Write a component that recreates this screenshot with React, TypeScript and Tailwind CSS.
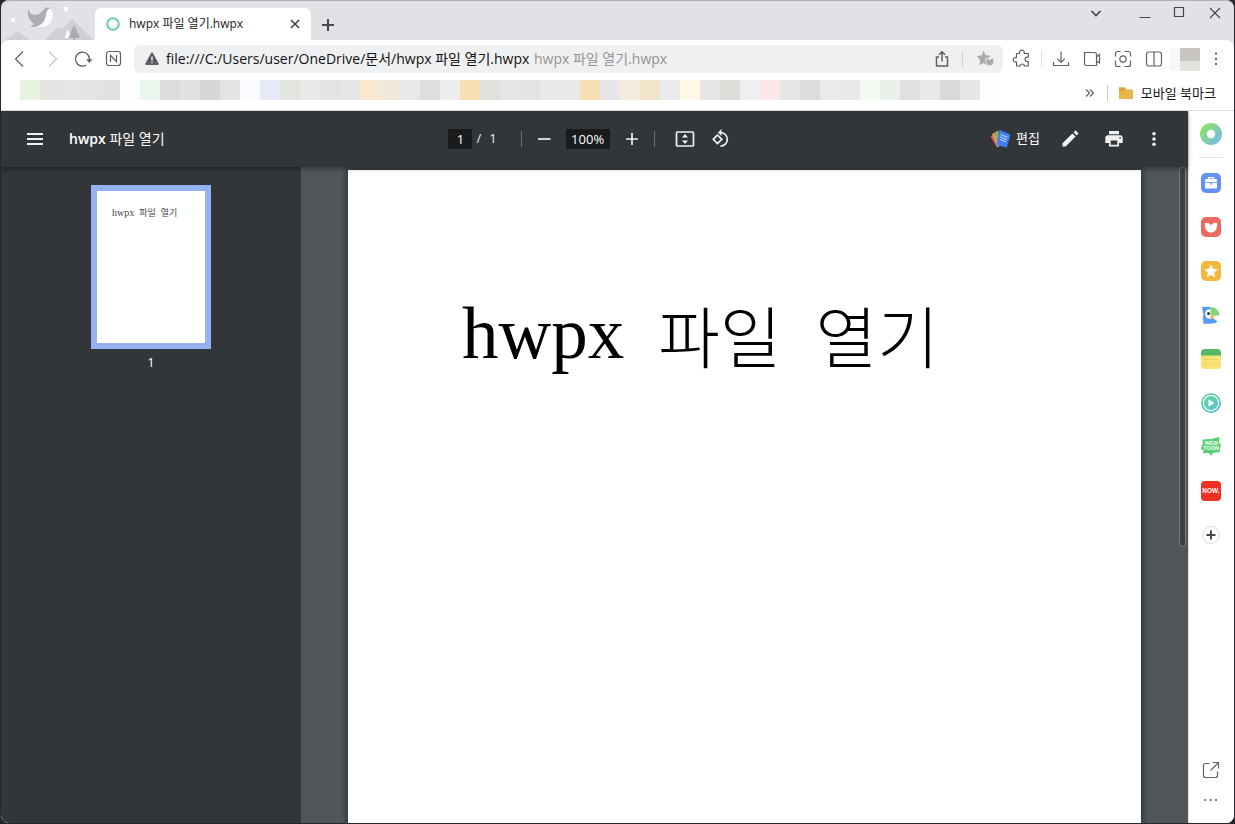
import React from "react";

const swatches = [
  "bg-[#e6f3e1]", "bg-[#e4e4e2]", "bg-[#e5e5e5]", "bg-[#e3e3e3]", "bg-[#e1e2e4]", "bg-[#fdfdfd]", "bg-[#e9f6ee]",
  "bg-[#dadddb]", "bg-[#e0e2e0]", "bg-[#d5d6d8]", "bg-[#e3e3e3]", "bg-[#f9fbff]", "bg-[#e7eafa]", "bg-[#e3e3e0]",
  "bg-[#e8e8e8]", "bg-[#e3e3e5]", "bg-[#e7e7e7]", "bg-[#f9e9d0]", "bg-[#f1e8dc]", "bg-[#e8e8e6]", "bg-[#dcdfde]",
  "bg-[#eeeeee]", "bg-[#f8e0b5]", "bg-[#e0e0de]", "bg-[#e6e6e6]", "bg-[#e4e4e2]", "bg-[#e9e9e9]", "bg-[#e9e9e9]",
  "bg-[#f8e0b5]", "bg-[#e8e6e9]", "bg-[#f5ebdd]", "bg-[#f3e5cb]", "bg-[#ebebed]", "bg-[#fff8e7]", "bg-[#e8e7e5]",
  "bg-[#dedddA]", "bg-[#eeeff1]", "bg-[#fce8e8]", "bg-[#e7e7e5]", "bg-[#dadddc]", "bg-[#ebebeb]", "bg-[#e8e9e8]",
  "bg-[#f2faf2]", "bg-[#eaf1ea]", "bg-[#e0e0e0]", "bg-[#e8e8e6]", "bg-[#d9d9d9]", "bg-[#e7e7e7]", "bg-[#fdfdfd]",
];

type IconProps = { size?: number; box?: number; className?: string; children: React.ReactNode };

function Icon({ size = 20, box = 20, className = "", children }: IconProps) {
  return (
    <svg
      width={size}
      height={size}
      viewBox={`0 0 ${box} ${box}`}
      fill="none"
      stroke="currentColor"
      strokeWidth="1.2"
      aria-hidden="true"
      className={`block shrink-0 ${className}`}
    >
      {children}
    </svg>
  );
}

function Btn({ label, className = "", children }: { label: string; className?: string; children: React.ReactNode }) {
  return (
    <button type="button" aria-label={label} className={`flex shrink-0 items-center justify-center ${className}`}>
      {children}
    </button>
  );
}

function ThemeArt() {
  return (
    <svg width="94" height="40" viewBox="0 0 94 40" aria-hidden="true" className="block shrink-0">
      <path d="M3 40 17 30 30 40Z" fill="#cfcfd4" />
      <path d="M43 40 57 26 61 28 71 18 94 40Z" fill="#cfcfd4" />
      <circle cx="12" cy="19" r="2.1" fill="#fff" />
      <circle cx="65" cy="8" r="2.2" fill="#fff" />
      <path d="M46 7C52 7 53 14 51 19C48 26 41 27 36 25.500C43 22 40 15 46 7Z" fill="#fbfbfc" />
      <path d="M27 7.500C29 14 32 14 37 13.500C40 13 41 8 46 6.500L50 7C44 8 46 15 43 20C40 25 34 27 29 25.500C31 25 32 24 32.500 22.500C28 19 26 14 27 7.500Z" fill="#adafb4" />
      <path d="M67 28 70 37H63.500Z" fill="#fbfbfc" />
      <path d="M73 24 79 37H74V40H72V37H67.500Z" fill="#a8aab0" />
    </svg>
  );
}

function TabStrip() {
  return (
    <header className="flex h-10 items-stretch rounded-t-lg border-t border-[#b0b1b5] bg-[#e1e2e6] text-[#45474b]">
      <ThemeArt />
      <div className="flex h-8 w-[216px] items-center self-end rounded-t-md bg-white pr-2 pb-px pl-[11px]">
        <Icon size={14} box={14} className="text-[#62cfab]">
          <circle cx="7" cy="7" r="5.800" strokeWidth="2" />
        </Icon>
        <span className="ml-[9px] flex-1 text-xs whitespace-nowrap text-[#222]">hwpx 파일 열기.hwpx</span>
        <Btn label="탭 닫기" className="size-4">
          <Icon size={16} box={16}>
            <path d="m4 4 8 8M12 4l-8 8" strokeWidth="1.7" />
          </Icon>
        </Btn>
      </div>
      <Btn label="새 탭" className="mt-2 ml-px size-8">
        <Icon size={16} box={16}>
          <path d="M8 2v12M2 8h12" strokeWidth="2" />
        </Icon>
      </Btn>
      <div className="ml-auto flex h-6 items-center pr-[7px]">
        <Btn label="탭 검색" className="mr-[25px] size-6">
          <Icon><path d="m5.500 8 4.500 4.500L14.500 8" strokeWidth="1.700" /></Icon>
        </Btn>
        <Btn label="최소화" className="mr-2.5 size-6"><Icon><path d="M4.500 14.500h11" /></Icon></Btn>
        <Btn label="최대화" className="mr-3 size-6"><Icon><path d="M5.500 4.500h9v9h-9z" /></Icon></Btn>
        <Btn label="닫기" className="size-6"><Icon><path d="m5 5 10 10M15 5 5 15" /></Icon></Btn>
      </div>
    </header>
  );
}

function AddressRow() {
  return (
    <div className="flex h-[38px] items-center pl-2 text-[#5f6165]">
      <Btn label="뒤로" className="size-5">
        <Icon><path d="M14 2.500 6.500 10l7.500 7.500" /></Icon>
      </Btn>
      <Btn label="앞으로" className="ml-[15px] size-5 text-[#c4c5c8]">
        <Icon><path d="M5 2.500 12.500 10 5 17.500" /></Icon>
      </Btn>
      <Btn label="새로고침" className="ml-[9px] size-5">
        <Icon>
          <path d="M13 16.200A7 7 0 1 1 16.500 10v1" strokeWidth="1.400" />
          <path d="M13 10.200h6.500L16.300 14Z" fill="currentColor" stroke="none" />
        </Icon>
      </Btn>
      <Btn label="네이버 홈" className="ml-[11px] size-5">
        <Icon>
          <rect x="2.500" y="2.500" width="14" height="14" rx="2.500" />
          <path d="M6.500 13V6.300l6 6.400V6" strokeWidth="1.200" />
        </Icon>
      </Btn>
      <div className="ml-2.5 flex h-7 min-w-0 flex-1 items-center rounded-md bg-[#eff0f2] pr-[7px] pl-2.5">
        <Icon size={16} box={16} className="text-[#5b5c60]">
          <path d="M8 2.500 13.700 13H2.300Z" fill="currentColor" strokeLinejoin="round" strokeWidth="2" />
          <path d="M8 5.500v4M8 10.800v1.400" stroke="#eff0f2" strokeWidth="1.400" />
        </Icon>
        <input
          type="text"
          aria-label="주소"
          readOnly
          value="file:///C:/Users/user/OneDrive/문서/hwpx 파일 열기.hwpx"
          className="ml-1.5 h-6 w-[368px] bg-transparent text-sm leading-6 text-[#111] outline-none"
        />
        <span className="flex-1 text-sm whitespace-nowrap text-[#949494]">hwpx 파일 열기.hwpx</span>
        <Btn label="공유" className="size-5">
          <Icon>
            <path d="M7 8H4.500v9h11V8H13M10 12.500V3M7 5.800 10 2.800l3 3" strokeWidth="1.500" />
          </Icon>
        </Btn>
        <span className="mx-2.5 h-4 w-px bg-[#cfd0d2]" />
        <Btn label="북마크 추가" className="ml-[3px] size-5 text-[#aaa]">
          <Icon>
            <path d="m7.500 1.500 2 4.800 5.300.5-4.300 3.700-.2 3.500.5 2-3.300-2-4.300 2.500 1.200-5L.8 7l5-.7Z" fill="currentColor" stroke="none" />
            <path d="M9.800 9.500c1.800-.5 3 .2 3.900 1.500.8-1.300 2-2 4.100-1.500.5 4-1 7.300-4 7.300s-4.500-3.300-4-7.300Z" fill="currentColor" stroke="#eff0f2" strokeWidth="1" />
          </Icon>
        </Btn>
      </div>
      <Btn label="확장 프로그램" className="ml-[9px] size-5">
        <Icon>
          <path d="M4.500 4.500H7.700a2.400 2.400 0 1 1 4.400 0h4.200v3.700h-1a2.200 2.200 0 0 0 0 4.400h1v4.400h-4a2 2 0 0 0-4 0H4.500v-4.100a2.300 2.300 0 1 1 0-4.200Z" strokeLinejoin="round" />
        </Icon>
      </Btn>
      <span className="mx-[9px] h-4 w-px bg-[#dedfe1]" />
      <Btn label="다운로드" className="size-5">
        <Icon><path d="M10 2.500v11M6.200 9.700l3.800 3.800 3.800-3.800M2.500 13v3.500h15V13" /></Icon>
      </Btn>
      <Btn label="동영상" className="ml-[11px] size-5">
        <Icon><path d="M2.500 3.500h10a2 2 0 0 1 2 2v11h-10a2 2 0 0 1-2-2Zm12 4.500 3-2.500v8.500l-3-2" /></Icon>
      </Btn>
      <Btn label="화면 캡처" className="ml-[11px] size-5">
        <Icon>
          <path d="M7.500 2.500h-3a2 2 0 0 0-2 2v3m0 4v4a2 2 0 0 0 2 2h3m4 0h4a2 2 0 0 0 2-2v-4m0-4v-3a2 2 0 0 0-2-2h-4" />
          <circle cx="10" cy="10" r="3.200" />
        </Icon>
      </Btn>
      <Btn label="화면 분할" className="ml-[11px] size-5">
        <Icon>
          <rect x="2.500" y="3" width="15" height="14" rx="2.500" />
          <path d="M10 3v14" />
        </Icon>
      </Btn>
      <Btn label="프로필" className="ml-[5px] h-[23px] w-[31px]">
        <span className="h-full flex-1 bg-[#f7f7f7]" />
        <span className="flex h-full w-5 flex-col">
          <span className="h-[13px] bg-[#c8c5c0]" />
          <span className="flex-1 bg-[#e3e3de]" />
        </span>
      </Btn>
      <Btn label="메뉴" className="mr-2 ml-1.5 size-5">
        <Icon>
          <path d="M9 3.500h2v2H9zM9 9h2v2H9zM9 14h2v2H9z" fill="currentColor" stroke="none" />
        </Icon>
      </Btn>
    </div>
  );
}

function BookmarkBar() {
  return (
    <nav aria-label="북마크" className="flex h-[33px] items-start border-b border-[#dfe1e3] pt-0.5 pr-[18px] pl-[19px]">
      <div className="flex">
        {swatches.map((c, i) => (
          <span key={i} className={`h-5 w-5 ${c}`} />
        ))}
      </div>
      <div className="mt-[3px] ml-auto flex items-center">
        <Btn label="북마크 더보기" className="size-5 text-[#5f6165]">
          <Icon><path d="m6 6.500 3.500 3.500L6 13.500M10 6.500l3.500 3.500-3.500 3.500" /></Icon>
        </Btn>
        <span className="mx-[7px] h-4 w-px bg-[#c9cacc]" />
        <a href="#mobile" className="ml-1 flex items-center gap-2 text-[13px] leading-5 whitespace-nowrap text-[#111]">
          <Icon size={14} box={14}>
            <path d="M0 1.500h5.500L7.500 3.500H14V13H0Z" fill="#ebb449" stroke="none" />
            <path d="M0 1.500h5.500L7.500 3.500H6L4.500 5H0Z" fill="#dea03c" stroke="none" />
          </Icon>
          모바일 북마크
        </a>
      </div>
    </nav>
  );
}

function EditLogo() {
  return (
    <Icon className="mr-1.5">
      <g stroke="none">
        <path d="M.5 7.500 3.500 6l5 12-1.500.5Z" fill="#cf5a5c" />
        <path d="m2 5 3-1.500L8.500 17l-1 1Z" fill="#e99b55" />
        <path d="m5 3 3.500-1.500L9.500 17l-1.500 1Z" fill="#7fba55" />
        <path d="m9.500 1 11 4.500-3.700 13L6.500 16Z" fill="#3f7df3" />
        <path d="m10.500 5.500 7 2.700M10 8l7 2.700M10 10.500l6 2.300" stroke="#bcd2ff" strokeWidth="1.100" />
      </g>
    </Icon>
  );
}

function PdfToolbar() {
  return (
    <div className="relative z-10 grid h-14 shrink-0 grid-cols-[1fr_auto_1fr] items-center bg-[#323639] text-[#f1f1f1] shadow-[0_2px_4px_rgba(0,0,0,0.35)]">
      <div className="flex items-center pl-6">
        <Btn label="사이드바 전환" className="size-5">
          <Icon><path d="M2 5h16M2 10h16M2 15h16" strokeWidth="2" /></Icon>
        </Btn>
        <h1 className="ml-6 text-sm font-semibold whitespace-nowrap text-white">
          hwpx <span className="font-normal">파일 열기</span>
        </h1>
      </div>
      <div className="flex items-center pr-2.5 text-[13px]">
        <input aria-label="페이지" defaultValue="1" className="h-5 w-6 bg-[#191b1c] text-center text-white" />
        <span className="ml-1">/</span>
        <span className="ml-2">1</span>
        <span className="mr-3 ml-6 h-4 w-px bg-[#6b6e70]" />
        <Btn label="축소" className="size-5"><Icon><path d="M4 10h12.500" strokeWidth="1.700" /></Icon></Btn>
        <input aria-label="확대 비율" defaultValue="100%" className="mx-3 h-5 w-11 bg-[#191b1c] text-center text-white" />
        <Btn label="확대" className="size-5"><Icon><path d="M4 10h12M10 4v12" strokeWidth="1.700" /></Icon></Btn>
        <span className="mx-3 h-4 w-px bg-[#6b6e70]" />
        <Btn label="페이지에 맞춤" className="ml-2 size-5">
          <Icon>
            <rect x="1.500" y="3" width="17" height="14" rx="1" strokeWidth="1.700" />
            <path d="m10 5 3 3.500H7ZM10 15l3-3.500H7Z" fill="currentColor" stroke="none" />
          </Icon>
        </Btn>
        <Btn label="시계 반대 방향으로 회전" className="ml-4 size-5">
          <Icon>
            <path d="m6.500 6 4.300 4.300-4.300 4.200-4.200-4.200Z" strokeWidth="1.700" />
            <path d="M9.500 3.500a6.700 6.700 0 1 1 0 13.700" strokeWidth="1.700" />
            <path d="M10.500 0v7L7 3.500Z" fill="currentColor" stroke="none" />
          </Icon>
        </Btn>
      </div>
      <div className="flex items-center justify-end pr-6">
        <button type="button" className="flex items-center text-[13px] text-white">
          <EditLogo />
          편집
        </button>
        <Btn label="주석" className="ml-5 size-5">
          <Icon>
            <path d="M2.500 14.300 12.400 4.400l3.200 3.200-9.900 9.900H2.500Zm11-11 1.400-1.400c.4-.4.900-.4 1.300 0l1.900 1.900c.4.400.4.900 0 1.300L16.700 6.500Z" fill="currentColor" stroke="none" />
          </Icon>
        </Btn>
        <Btn label="인쇄" className="ml-6 size-5">
          <Icon>
            <path d="M5 2h10v3.200H5zM4 6.200h12a2.700 2.700 0 0 1 2.700 2.700V14H15v3.500H5V14H1.300V8.900A2.700 2.700 0 0 1 4 6.200Z" fill="currentColor" stroke="none" />
            <path d="M6.700 11.500h6.600v4.300H6.700zM15.300 8.200h1.500v1.500h-1.500z" fill="#323639" stroke="none" />
          </Icon>
        </Btn>
        <Btn label="더보기" className="ml-5 size-5">
          <Icon>
            <g fill="currentColor" stroke="none">
              <circle cx="10" cy="4.800" r="1.800" /><circle cx="10" cy="10" r="1.800" /><circle cx="10" cy="15.200" r="1.800" />
            </g>
          </Icon>
        </Btn>
      </div>
    </div>
  );
}

function Viewer() {
  return (
    <main className="flex min-w-0 flex-1 flex-col">
      <PdfToolbar />
      <div className="flex min-h-0 flex-1">
        <aside className="flex w-[300px] shrink-0 flex-col items-center bg-[#323639] pt-[18px]">
          <button
            type="button"
            aria-label="1페이지"
            className="flex h-[164px] w-[120px] items-start border-6 border-[#95b1f2] bg-white pt-4 pl-[15px] font-['Liberation_Serif','Noto_Sans_CJK_KR',serif] text-[10px] leading-3 whitespace-nowrap text-[#444]"
          >
            <span>hwpx</span>
            <span className="ml-[5px] text-[9px]">파일</span>
            <span className="ml-[5px] text-[9px]">열기</span>
          </button>
          <span className="mt-[3px] text-[13px] leading-5 text-white">1</span>
        </aside>
        <div className="relative min-w-0 flex-1 overflow-hidden bg-[#525659] pt-[3px]">
          <article className="mx-auto flex h-full max-w-[793px] items-start bg-white pt-[122px] pl-[114px] font-['Liberation_Serif','Noto_Sans_CJK_KR',serif] text-[73px] leading-[84px] whitespace-nowrap text-black shadow-[0_0_6px_2px_rgba(0,0,0,0.4)]">
            <span>hwpx</span>
            <span className="ml-[34px] text-[67px] leading-[96px] font-light">파일</span>
            <span className="ml-[34px] text-[67px] leading-[96px] font-light">열기</span>
          </article>
          <div className="absolute top-0 right-0.5 h-[380px] w-[7px] rounded-full border border-[#7b7e80] bg-[#3c4043]" />
        </div>
      </div>
    </main>
  );
}

function SideRail() {
  return (
    <aside aria-label="사이드바" className="flex w-[45px] shrink-0 flex-col items-center bg-white pt-3 pr-px pb-[13px] text-[#5f6165]">
      <svg width="0" height="0" className="absolute" aria-hidden="true">
        <defs>
          <linearGradient id="whale" x1="0" y1="0" x2="1" y2="1">
            <stop offset="0.200" stopColor="#8be06d" /><stop offset="0.900" stopColor="#75b9ee" />
          </linearGradient>
          <linearGradient id="play" x1="0" y1="0" x2="1" y2="1">
            <stop offset="0" stopColor="#67dc91" /><stop offset="1" stopColor="#55bddb" />
          </linearGradient>
        </defs>
      </svg>
      <Btn label="웨일" className="size-[22px]">
        <Icon size={22} box={22}>
          <circle cx="11" cy="11" r="11" fill="url(#whale)" stroke="none" />
          <circle cx="11" cy="11" r="4.200" fill="#fff" stroke="none" />
        </Icon>
      </Btn>
      <span className="mt-3 h-px w-6 bg-[#dfe0e2]" />
      <div className="mt-[15px] flex flex-col items-center gap-6">
        <Btn label="도구 모음" className="size-5">
          <Icon>
            <rect width="20" height="20" rx="5" fill="#6292f6" stroke="none" />
            <rect x="4" y="6" width="12" height="9.500" rx="1" fill="#fff" stroke="none" />
            <path d="M7.500 6V4.600h5V6" stroke="#fff" />
            <path d="M4 9.500h12" stroke="#6292f6" strokeWidth=".8" />
            <path d="M9 10.900h2" stroke="#6292f6" />
          </Icon>
        </Btn>
        <Btn label="밸리" className="size-5">
          <Icon>
            <rect width="20" height="20" rx="5" fill="#ec6a64" stroke="none" />
            <path d="M4 6c2.700-.5 4.800.5 6 2.500C11.200 6.500 13.300 5.500 16 6c.7 5.500-1.500 9.500-6 9.500S3.300 11.500 4 6Z" fill="#fff" stroke="none" />
          </Icon>
        </Btn>
        <Btn label="즐겨찾기" className="size-5">
          <Icon>
            <rect width="20" height="20" rx="5" fill="#f2b73f" stroke="none" />
            <path d="m10 4 1.800 4.100 4.500.4-3.400 3 1 4.400-3.900-2.300-3.900 2.300 1-4.400-3.400-3 4.500-.4Z" fill="#fff" stroke="#fff" strokeWidth=".5" strokeLinejoin="round" />
          </Icon>
        </Btn>
        <Btn label="파파고" className="size-5">
          <Icon>
            <g stroke="none">
              <path d="M1 1.500C3 3 6 1 9.500 2.200V18.500H2.500V13L1 15l1.500-5Z" fill="#559af0" />
              <path d="M2.500 12h8L16.500 16.500c-2 2-4.500 2-6.500 2H2.500Z" fill="#559af0" />
              <ellipse cx="8" cy="9" rx="3.800" ry="4.800" fill="#fff" />
              <path d="M9.500 2c5.500.3 8.500 3.500 9 8.500h-9Z" fill="#80d47e" />
              <path d="M9.500 10.500h5L10 15Z" fill="#f2be52" />
              <circle cx="7.500" cy="8.500" r="1.500" fill="#333" />
            </g>
          </Icon>
        </Btn>
        <Btn label="메모" className="size-5">
          <Icon>
            <g stroke="none">
              <rect width="20" height="20" rx="4" fill="#f7e376" />
              <path d="M0 6.500V4a4 4 0 0 1 4-4h12a4 4 0 0 1 4 4v2.500Z" fill="#52b865" />
            </g>
            <path d="M0 10.500h20M0 15h20M4.500 7v13" stroke="#ecd363" strokeWidth=".7" />
          </Icon>
        </Btn>
        <Btn label="미디어" className="size-5">
          <Icon>
            <circle cx="10" cy="10" r="10" fill="url(#play)" stroke="none" />
            <circle cx="10" cy="10" r="7.600" stroke="#fff" strokeWidth="1.100" />
            <path d="m7.500 6.200 5.800 3.800-5.800 3.800Z" fill="#fff" stroke="none" />
          </Icon>
        </Btn>
        <Btn label="웹툰" className="size-5">
          <Icon>
            <path d="M1.500 2.500 10 2l8.500-2-.7 6.500 2.200.2-1.500 8.500-6.500.5-1.700 3.300-2.500-3.200-5.800.7L2.500 13 0 12.500 .8 8l1.200-.5Z" fill="#56cf70" stroke="none" />
            <g fill="#fff" stroke="none" fontFamily="Liberation Sans, sans-serif" fontWeight="bold" textAnchor="middle">
              <text x="10.200" y="8.300" fontSize="5.500">WEB</text>
              <text x="10" y="13.300" fontSize="5.500">TOON</text>
            </g>
          </Icon>
        </Btn>
        <Btn label="NOW" className="size-5">
          <Icon>
            <rect width="20" height="20" rx="4" fill="#ee3124" stroke="none" />
            <text x="10" y="12.300" fontSize="6.500" fontWeight="bold" fontFamily="Liberation Sans, sans-serif" textAnchor="middle" fill="#fff" stroke="none">NOW.</text>
          </Icon>
        </Btn>
        <Btn label="추가" className="size-5">
          <Icon>
            <circle cx="10" cy="10" r="8.500" stroke="#dcdddf" strokeWidth="1" />
            <path d="M10 5.500v9M5.500 10h9" stroke="#45474b" strokeWidth="2" />
          </Icon>
        </Btn>
      </div>
      <div className="mt-auto flex flex-col gap-2.5">
        <Btn label="새 창으로 열기" className="size-5">
          <Icon><path d="M8.500 3.500h-4a2 2 0 0 0-2 2v10a2 2 0 0 0 2 2h10a2 2 0 0 0 2-2v-4M9.500 10.500l7.500-7.500M11.500 2.500h6v6" /></Icon>
        </Btn>
        <Btn label="설정 더보기" className="size-5">
          <Icon><path d="M3 10h2M8.500 10h2M14 10h2" strokeWidth="2" stroke="#77797c" /></Icon>
        </Btn>
      </div>
    </aside>
  );
}

export default function App() {
  return (
    <div className="flex h-screen flex-col bg-[#25272a] px-px pb-px font-['Open_Sans','Noto_Sans_CJK_KR',sans-serif]">
      <div className="flex min-h-0 flex-1 flex-col overflow-hidden rounded-lg bg-[#e1e2e6]">
        <TabStrip />
        <div className="rounded-t-lg bg-white">
          <AddressRow />
          <BookmarkBar />
        </div>
        <div className="flex min-h-0 flex-1 gap-px bg-[#e1e2e4]">
          <Viewer />
          <SideRail />
        </div>
      </div>
    </div>
  );
}
